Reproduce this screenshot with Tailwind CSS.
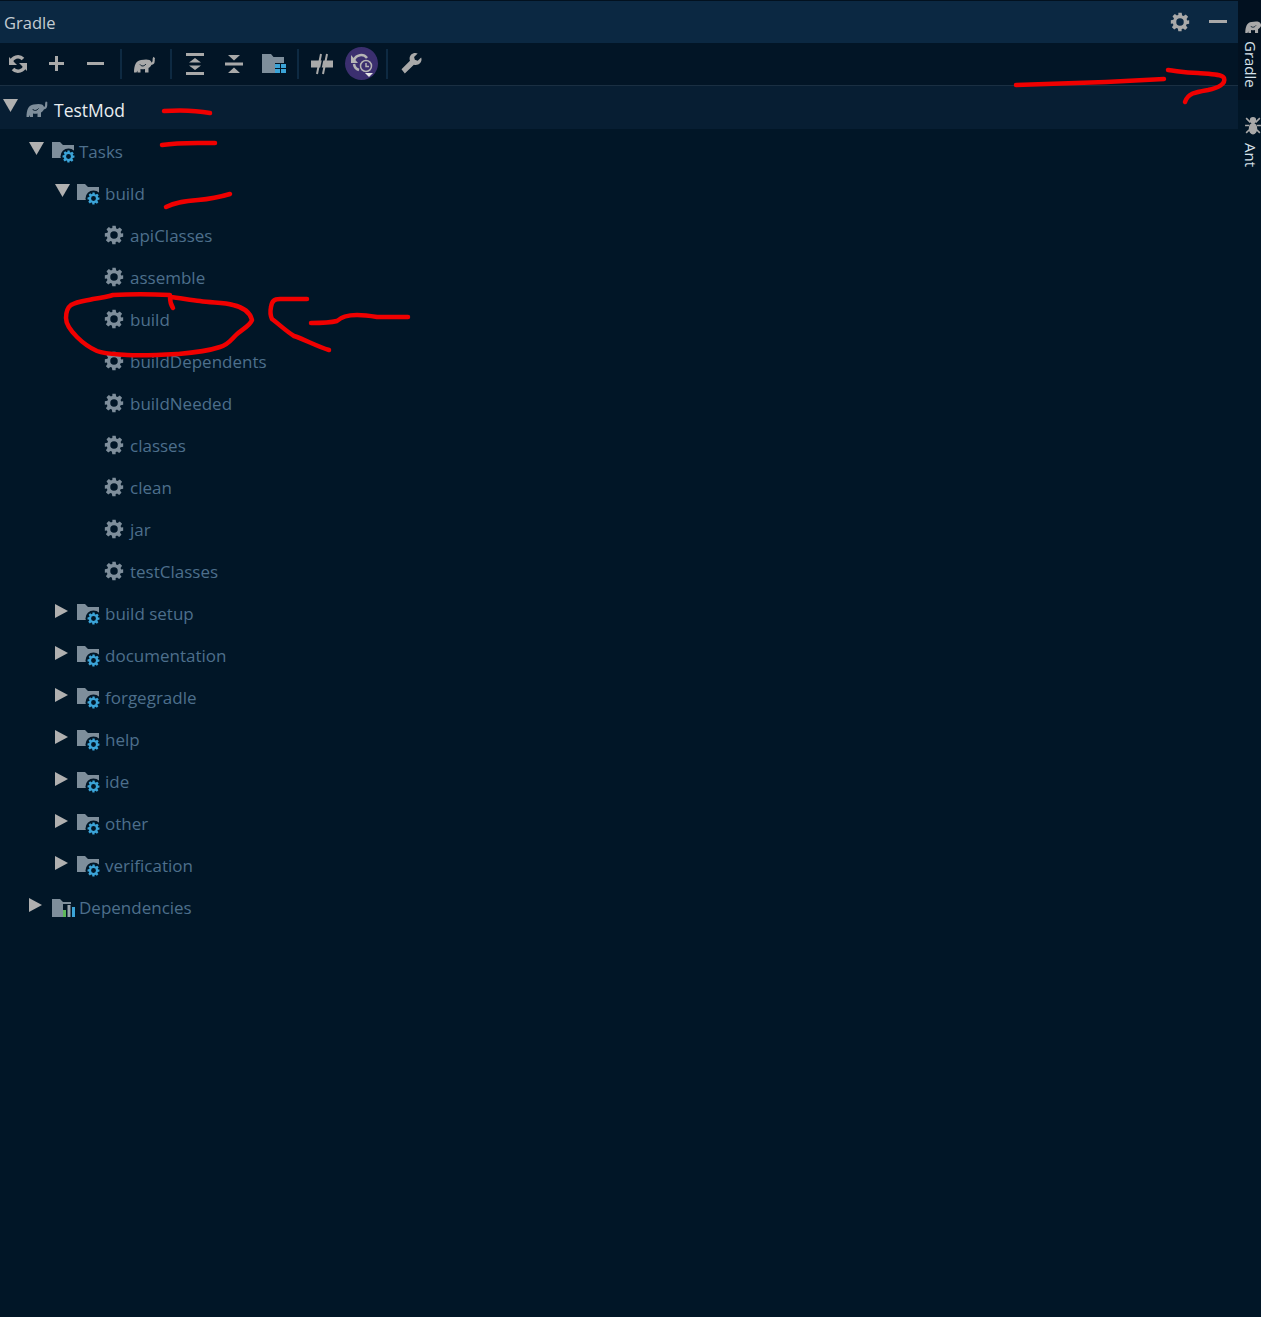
<!DOCTYPE html>
<html lang="en">
<head>
<meta charset="UTF-8">
<title>Gradle</title>
<script src="https://cdn.jsdelivr.net/npm/@tailwindcss/browser@4"></script>
</head>
<body class="bg-[#011627] overflow-hidden">
<svg class="hidden">
  <symbol id="gear" viewBox="0 0 24 24"><path fill-rule="evenodd" d="M10 1h4l.6 3.100 1.700.7 2.600-1.800 2.800 2.800-1.800 2.600.7 1.700L23 10v4l-3.100.6-.7 1.700 1.800 2.600-2.800 2.800-2.600-1.800-1.700.7L14 23h-4l-.6-3.100-1.700-.7-2.600 1.800-2.800-2.800 1.800-2.600-.7-1.700L1 14v-4l3.100-.6.7-1.700L3 5.100 5.800 2.300l2.600 1.800 1.700-.7zM12 7.500a4.500 4.500 0 1 0 0 9 4.500 4.500 0 0 0 0-9z"/></symbol>
  <symbol id="elephant" viewBox="0 0 22 17"><path stroke="none" d="M0 17C0 10 2 5 7 4.500 10 4 13 3.500 15.500 4.500 17 5 18 7 17.500 9 17 11 15.500 12 14.500 12.500V17H11v-3.500c-1.500.4-3 .4-4.500 0V17H3.500v-2l-1 2z"/><path fill="none" stroke-width="2.200" d="M16 8.500c2.500 0 3.700-1.500 3.700-3.500 0-1-.4-2 .6-3"/><path fill="none" stroke="#011627" stroke-width="1" d="M6 9c1.500 2 4 2 6-.5"/></symbol>
  <symbol id="taskfolder" viewBox="0 0 23 21"><path fill="#7e8e9b" d="M0 0h8l3 3h11v13H0z"/><circle cx="16.500" cy="14.500" r="8" fill="#011627"/><svg x="10" y="8" width="13" height="13" fill="#3ba4d8"><use href="#gear"/></svg></symbol>
</svg>

<div class="h-[1317px] flex font-['Open_Sans','Noto_Sans',sans-serif] text-[17px]">
  <main class="flex-1 flex flex-col">
    <!-- title bar -->
    <header class="h-[43px] bg-[#0b2842] border-t border-[#02111f] flex items-center pl-1 pr-[11px] text-[#c3ccd3]">
      <span class="flex-1 text-[16.5px] pt-0.5">Gradle</span>
      <svg class="w-5 h-5 fill-[#a9a9a9] mr-[19px]"><use href="#gear"/></svg>
      <div class="w-[18px] h-[3px] bg-[#a9a9a9] mb-0.5"></div>
    </header>

    <!-- toolbar -->
    <div class="h-[43px] bg-[#021526] border-b border-[#1a2f42] flex items-center pl-[8px] pb-px">
      <svg class="w-5 h-5 fill-none stroke-[#a9a9a9] stroke-[3.5]" viewBox="0 0 20 20"><path d="M3 8.500a7 7 0 0 1 12-3.500M17 11.500a7 7 0 0 1-12 3.500"/><path class="fill-[#a9a9a9] stroke-none" d="M1 3v8h8zM19 17V9h-8z"/></svg>
      <svg class="w-[17px] h-[17px] ml-[20px] fill-[#a9a9a9]" viewBox="0 0 17 17"><path d="M7 1h3v6h6v3h-6v6H7v-6H1V7h6z"/></svg>
      <div class="w-[17px] h-[3px] bg-[#a9a9a9] ml-[22px]"></div>
      <div class="w-0.5 h-[30px] bg-[#0e2a42] ml-[16px]"></div>
      <svg class="w-[22px] h-[18px] ml-[12px] fill-[#a9a9a9] stroke-[#a9a9a9]"><use href="#elephant"/></svg>
      <div class="w-0.5 h-[30px] bg-[#0e2a42] ml-[14px]"></div>
      <svg class="w-[18px] h-[22px] ml-[14px] fill-[#a9a9a9]" viewBox="0 0 18 22"><path d="M0 0h18v3H0zM0 19h18v3H0zM3 9.500 9 5l6 4.500zM3 12.500h12L9 17z"/></svg>
      <svg class="w-[18px] h-[18px] ml-[21px] fill-[#a9a9a9]" viewBox="0 0 18 18"><path d="M0 7.500h18v3H0zM3 0h12L9 5.500zM3 18h12L9 12.500z"/></svg>
      <svg class="w-[24px] h-[20px] ml-[19px]" viewBox="0 0 24 20"><path fill="#7e8e9b" d="M0 0h9l2.500 3H22v6h-9v10H0z"/><path fill="#3ba4d8" d="M13 10h5v4h-5zM19 10h5v4h-5zM13 15h5v4h-5zM19 15h5v4h-5z"/></svg>
      <div class="w-0.5 h-[30px] bg-[#0e2a42] ml-[11px]"></div>
      <svg class="w-[22px] h-[22px] ml-[12px]" viewBox="0 0 22 22"><path fill="#a9a9a9" d="M0 7.500h22v7H0z"/><path fill="none" stroke="#021526" stroke-width="1.500" d="M8.500 21.500 13 .5"/><path fill="none" stroke="#a9a9a9" stroke-width="2" d="M6 21 10 1M12 21l4-20"/></svg>
      <div class="relative w-[33px] h-[33px] rounded-full bg-[#3b2f6f] ml-[12px]">
        <svg class="absolute inset-0 fill-none stroke-[#b5b5b5] stroke-[2.5]" viewBox="0 0 33 33"><path d="M9 13a7.500 7.500 0 0 1 13-2M9 17a7.500 7.500 0 0 0 5 6"/><path class="fill-[#b5b5b5] stroke-none" d="M6 8v8h7z"/><circle class="stroke-[1.5] fill-[#3b2f6f]" cx="21" cy="19" r="5.500"/><path class="stroke-[1.5]" d="M21 16v3.500h3"/><path class="fill-[#e6e6e6] stroke-none" d="M20 26h8l-4 4z"/></svg>
      </div>
      <div class="w-0.5 h-[30px] bg-[#0e2a42] ml-[8px]"></div>
      <svg class="w-[21px] h-[21px] ml-[13px] fill-[#a9a9a9]" viewBox="0 0 22 22"><path d="M15 0c-3.500 0-6 2.500-6 6 0 .8.100 1.500.4 2.100L.5 17 4 21.500l9.500-9.300c.7.300 1.300.4 2 .4 3.500 0 6-2.500 6-6 0-.8-.1-1.300-.4-2l-3.600 3.500-3-1-.8-3L17.500.5C16.700.200 15.800 0 15 0z"/></svg>
    </div>

    <!-- tree -->
    <div class="flex flex-col text-[#4d6f8c]">
      <!-- TestMod -->
      <div class="h-[43px] bg-[#071e33] flex items-center pl-[3px] pt-[4px] text-[#e8edf0]">
        <svg class="w-[15px] h-[13px] fill-[#b0b0b0] mb-[8px] mr-[8px]"><path d="M0 0h15L7.500 13z"/></svg>
        <svg class="w-[23px] h-[17px] fill-[#7e8e9b] stroke-[#7e8e9b] mr-[5px] mb-[2px]"><use href="#elephant"/></svg>
        <span class="text-[17.5px] pt-0.5">TestMod</span>
      </div>
      <!-- Tasks -->
      <div class="h-[42px] flex items-center pl-[29px] pt-1">
        <svg class="w-[15px] h-[13px] fill-[#b0b0b0] mb-[7px] mr-[8px]"><path d="M0 0h15L7.500 13z"/></svg>
        <svg class="w-[23px] h-[21px] mr-[4px]"><use href="#taskfolder"/></svg>
        <span>Tasks</span>
      </div>
      <!-- build -->
      <div class="h-[42px] flex items-center pl-[55px] pt-1">
        <svg class="w-[15px] h-[13px] fill-[#b0b0b0] mb-[7px] mr-[7px]"><path d="M0 0h15L7.500 13z"/></svg>
        <svg class="w-[23px] h-[21px] mr-[5px]"><use href="#taskfolder"/></svg>
        <span>build</span>
      </div>
      <!-- tasks -->
      <div class="h-[42px] flex items-center pl-[104px] pt-1"><svg class="w-5 h-5 fill-[#7e8e9b] mr-[6px] mb-[3px]"><use href="#gear"/></svg><span>apiClasses</span></div>
      <div class="h-[42px] flex items-center pl-[104px] pt-1"><svg class="w-5 h-5 fill-[#7e8e9b] mr-[6px] mb-[3px]"><use href="#gear"/></svg><span>assemble</span></div>
      <div class="h-[42px] flex items-center pl-[104px] pt-1"><svg class="w-5 h-5 fill-[#7e8e9b] mr-[6px] mb-[3px]"><use href="#gear"/></svg><span>build</span></div>
      <div class="h-[42px] flex items-center pl-[104px] pt-1"><svg class="w-5 h-5 fill-[#7e8e9b] mr-[6px] mb-[3px]"><use href="#gear"/></svg><span>buildDependents</span></div>
      <div class="h-[42px] flex items-center pl-[104px] pt-1"><svg class="w-5 h-5 fill-[#7e8e9b] mr-[6px] mb-[3px]"><use href="#gear"/></svg><span>buildNeeded</span></div>
      <div class="h-[42px] flex items-center pl-[104px] pt-1"><svg class="w-5 h-5 fill-[#7e8e9b] mr-[6px] mb-[3px]"><use href="#gear"/></svg><span>classes</span></div>
      <div class="h-[42px] flex items-center pl-[104px] pt-1"><svg class="w-5 h-5 fill-[#7e8e9b] mr-[6px] mb-[3px]"><use href="#gear"/></svg><span>clean</span></div>
      <div class="h-[42px] flex items-center pl-[104px] pt-1"><svg class="w-5 h-5 fill-[#7e8e9b] mr-[6px] mb-[3px]"><use href="#gear"/></svg><span>jar</span></div>
      <div class="h-[42px] flex items-center pl-[104px] pt-1"><svg class="w-5 h-5 fill-[#7e8e9b] mr-[6px] mb-[3px]"><use href="#gear"/></svg><span>testClasses</span></div>
      <!-- collapsed groups -->
      <div class="h-[42px] flex items-center pl-[55px] pt-1"><svg class="w-[13px] h-[14px] fill-[#b0b0b0] mb-[7px] mr-[9px]"><path d="M0 0l13 7-13 7z"/></svg><svg class="w-[23px] h-[21px] mr-[5px]"><use href="#taskfolder"/></svg><span>build setup</span></div>
      <div class="h-[42px] flex items-center pl-[55px] pt-1"><svg class="w-[13px] h-[14px] fill-[#b0b0b0] mb-[7px] mr-[9px]"><path d="M0 0l13 7-13 7z"/></svg><svg class="w-[23px] h-[21px] mr-[5px]"><use href="#taskfolder"/></svg><span>documentation</span></div>
      <div class="h-[42px] flex items-center pl-[55px] pt-1"><svg class="w-[13px] h-[14px] fill-[#b0b0b0] mb-[7px] mr-[9px]"><path d="M0 0l13 7-13 7z"/></svg><svg class="w-[23px] h-[21px] mr-[5px]"><use href="#taskfolder"/></svg><span>forgegradle</span></div>
      <div class="h-[42px] flex items-center pl-[55px] pt-1"><svg class="w-[13px] h-[14px] fill-[#b0b0b0] mb-[7px] mr-[9px]"><path d="M0 0l13 7-13 7z"/></svg><svg class="w-[23px] h-[21px] mr-[5px]"><use href="#taskfolder"/></svg><span>help</span></div>
      <div class="h-[42px] flex items-center pl-[55px] pt-1"><svg class="w-[13px] h-[14px] fill-[#b0b0b0] mb-[7px] mr-[9px]"><path d="M0 0l13 7-13 7z"/></svg><svg class="w-[23px] h-[21px] mr-[5px]"><use href="#taskfolder"/></svg><span>ide</span></div>
      <div class="h-[42px] flex items-center pl-[55px] pt-1"><svg class="w-[13px] h-[14px] fill-[#b0b0b0] mb-[7px] mr-[9px]"><path d="M0 0l13 7-13 7z"/></svg><svg class="w-[23px] h-[21px] mr-[5px]"><use href="#taskfolder"/></svg><span>other</span></div>
      <div class="h-[42px] flex items-center pl-[55px] pt-1"><svg class="w-[13px] h-[14px] fill-[#b0b0b0] mb-[7px] mr-[9px]"><path d="M0 0l13 7-13 7z"/></svg><svg class="w-[23px] h-[21px] mr-[5px]"><use href="#taskfolder"/></svg><span>verification</span></div>
      <!-- Dependencies -->
      <div class="h-[42px] flex items-center pl-[29px] pt-1"><svg class="w-[13px] h-[14px] fill-[#b0b0b0] mb-[7px] mr-[10px]"><path d="M0 0l13 7-13 7z"/></svg><svg class="w-[24px] h-[20px] mr-[3px]" viewBox="0 0 24 20"><path fill="#7e8e9b" d="M0 1h8l3 3h8v2h-8v13H0z"/><path fill="#5fb85a" d="M11 12h3v7h-3z"/><path fill="#9aa5ae" d="M15.500 7h3v12h-3z"/><path fill="#3ba4d8" d="M20 9h3v10h-3z"/></svg><span>Dependencies</span></div>
    </div>
  </main>

  <!-- side tool strip -->
  <aside class="w-[23px] flex flex-col text-[#d7e2ea] text-[15px] leading-[15px] overflow-hidden">
    <div class="h-[100px] bg-[#021120] flex flex-col items-start pt-[18px]">
      <svg class="w-[20px] h-[15px] fill-[#a9a9a9] stroke-[#a9a9a9] shrink-0 ml-[7px]"><use href="#elephant"/></svg>
      <span class="[writing-mode:vertical-rl] mt-[8px] ml-[5px]">Gradle</span>
    </div>
    <div class="flex flex-col items-start pt-[16px]">
      <svg class="w-[16px] h-[19px] fill-none stroke-[#a9a9a9] stroke-[1.5] shrink-0 ml-[7px]" viewBox="0 0 15 18"><ellipse class="fill-[#a9a9a9] stroke-none" cx="7.500" cy="4" rx="3" ry="3"/><ellipse class="fill-[#a9a9a9] stroke-none" cx="7.500" cy="12" rx="4" ry="5.500"/><path d="M1 2l4 4M14 2l-4 4M0 9h4M15 9h-4M1 16l3-3M14 16l-3-3"/></svg>
      <span class="[writing-mode:vertical-rl] mt-[8px] ml-[5px]">Ant</span>
    </div>
  </aside>
</div>

<!-- red annotation strokes over the screenshot -->
<svg class="absolute inset-0 w-[1261px] h-[1317px] fill-none stroke-[#f00000] stroke-[4.5] pointer-events-none" style="stroke-linecap:round;stroke-linejoin:round">
  <path d="M1016 85l90-3 58-3"/>
  <path d="M1168 70c10 1 15 3 30 3 12 1 24 1 26 5 2 6-6 10-16 12-12 2-20 3-23 12"/>
  <path d="M164 111c15-1 30-1 46 2"/>
  <path d="M162 145c18-3 35-2 53-2"/>
  <path d="M166 207c10-5 20-6 32-7 12-1 22-3 32-6"/>
  <path d="M173 308C171 305 170 302 170 297 180 298 190 300 200 301 212 303 224 302 233 305 242 307 250 312 252 320 250 326 241 330 236 335 231 340 228 345 220 347 205 352 190 353 177 354 160 355 143 356 127 355 115 354 105 354 97 351 88 347 82 342 77 337 71 331 66 325 66 318 66 312 67 308 71 305 78 301 85 301 93 299 100 298 107 297 113 295 130 294 150 294 170 295"/>
  <path d="M307 299h-27c-6 0-8 2-9 8-1 5-1 8 1 12 8 6 14 12 22 17 12 4 22 10 35 14"/>
  <path d="M311 323c10 0 18 0 26-2 5-5 12-6 20-6 8 0 14 1 20 2h31"/>
</svg>
</body>
</html>
